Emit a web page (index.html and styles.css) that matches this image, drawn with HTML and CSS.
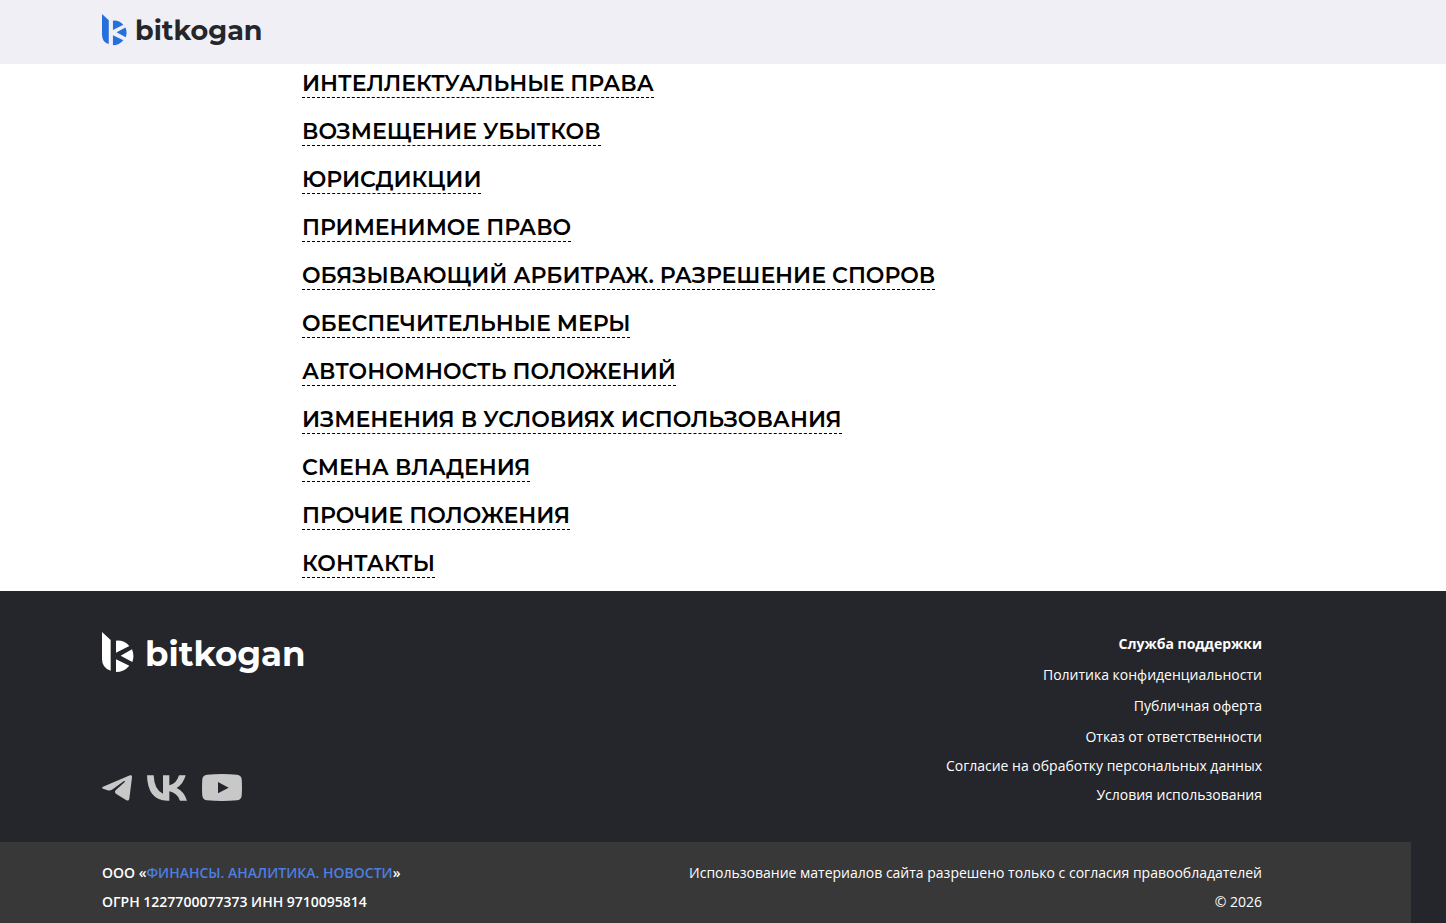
FILE: index.html
```html
<!DOCTYPE html>
<html lang="ru">
<head>
  <meta charset="UTF-8">
  <meta name="viewport" content="width=device-width, initial-scale=1.0">
  <title>Условия использования – bitkogan</title>
  <link rel="stylesheet" href="styles.css">
</head>
<body>
  <header class="header">
    <a class="logo" href="#">
      <svg class="logo-mark" viewBox="0 0 96 120" aria-hidden="true">
        <path d="M0 0L26 24V116Q0 108 0 80Z"/>
        <path d="M42 26Q66 24 82 42L42 62Z"/>
        <path d="M90 52Q98 70 91 90L56 71Z"/>
        <path d="M42 82L82 101Q66 120 42 120Z"/>
      </svg>
      <span>bitkogan</span>
    </a>
  </header>

  <main class="sections">
    <h2><a href="#">ИНТЕЛЛЕКТУАЛЬНЫЕ ПРАВА</a></h2>
    <h2><a href="#">ВОЗМЕЩЕНИЕ УБЫТКОВ</a></h2>
    <h2><a href="#">ЮРИСДИКЦИИ</a></h2>
    <h2><a href="#">ПРИМЕНИМОЕ ПРАВО</a></h2>
    <h2><a href="#">ОБЯЗЫВАЮЩИЙ АРБИТРАЖ. РАЗРЕШЕНИЕ СПОРОВ</a></h2>
    <h2><a href="#">ОБЕСПЕЧИТЕЛЬНЫЕ МЕРЫ</a></h2>
    <h2><a href="#">АВТОНОМНОСТЬ ПОЛОЖЕНИЙ</a></h2>
    <h2><a href="#">ИЗМЕНЕНИЯ В УСЛОВИЯХ ИСПОЛЬЗОВАНИЯ</a></h2>
    <h2><a href="#">СМЕНА ВЛАДЕНИЯ</a></h2>
    <h2><a href="#">ПРОЧИЕ ПОЛОЖЕНИЯ</a></h2>
    <h2><a href="#">КОНТАКТЫ</a></h2>
  </main>

  <footer class="footer">
    <div class="footer-top">
      <div class="footer-brand">
        <a class="logo logo-light" href="#">
          <svg class="logo-mark" viewBox="0 0 96 120" aria-hidden="true">
            <path d="M0 0L26 24V116Q0 108 0 80Z"/>
            <path d="M42 26Q66 24 82 42L42 62Z"/>
            <path d="M90 52Q98 70 91 90L56 71Z"/>
            <path d="M42 82L82 101Q66 120 42 120Z"/>
          </svg>
          <span>bitkogan</span>
        </a>
        <div class="socials">
          <a href="#" aria-label="Telegram">
            <svg width="30" height="26" viewBox="0 0 90 78">
              <path d="M3 35L84 1Q91 -1 90 7L82 71Q80 80 72 75L43 57Q36 52 41 46L69 20Q69 17 65 19L32 43Q24 48 17 46L3 41Q-2 38 3 35Z"/>
            </svg>
          </a>
          <a href="#" aria-label="VK">
            <svg width="40" height="26" viewBox="0 0 120 78">
              <path d="M0 1H20Q22 46 48 56V1H67V31Q88 27 96 1H116Q109 27 89 39Q111 49 120 77H99Q91 54 67 49V77H61Q2 77 0 1Z"/>
            </svg>
          </a>
          <a href="#" aria-label="YouTube">
            <svg width="40" height="27" viewBox="0 0 120 81">
              <path fill-rule="evenodd" d="M15 2Q60 -2 105 2Q117 3 119 15Q121 40 119 66Q117 78 105 79Q60 83 15 79Q3 78 1 66Q-1 40 1 15Q3 3 15 2ZM48 24V58L80 41Z"/>
            </svg>
          </a>
        </div>
      </div>
      <nav class="footer-nav">
        <div class="footer-links">
          <a class="support" href="#">Служба поддержки</a>
          <a href="#">Политика конфиденциальности</a>
          <a href="#">Публичная оферта</a>
          <a href="#">Отказ от ответственности</a>
        </div>
        <a href="#">Согласие на обработку персональных данных</a>
        <a href="#">Условия использования</a>
      </nav>
    </div>
    <div class="footer-bottom">
      <div class="company">
        ООО «<a href="#">ФИНАНСЫ. АНАЛИТИКА. НОВОСТИ</a>»<br>
        ОГРН 1227700077373 ИНН 9710095814
      </div>
      <div class="rights">
        Использование материалов сайта разрешено только с согласия правообладателей<br>
        © 2026
      </div>
    </div>
  </footer>
</body>
</html>
```
FILE: styles.css
```css
* {
  box-sizing: border-box;
}

body {
  margin: 0;
  font-family: "Open Sans", "Noto Sans", sans-serif;
  font-size: 14px;
  color: #000;
  background: #fff;
}

a {
  color: inherit;
  text-decoration: none;
}

svg {
  display: block;
  fill: currentColor;
}

.header {
  padding: 12px 102px 18px;
  background: #f0eff5;
}

.logo {
  display: flex;
  align-items: center;
  gap: 8px;
  width: max-content;
  font-family: Montserrat, Inter, sans-serif;
  font-size: 27px;
  font-weight: 700;
  line-height: 30px;
  color: #25262b;
}

.logo span {
  padding-top: 4px;
}

.logo-mark {
  width: 25px;
  height: 33px;
  color: #266fdd;
}

.sections {
  display: flex;
  flex-direction: column;
  gap: 21px;
  padding: 7px 102px 13px 302px;
}

.sections h2 {
  margin: 0;
  font-family: Montserrat, Inter, sans-serif;
  font-size: 22px;
  font-weight: 600;
  line-height: 26px;
}

.sections a {
  display: block;
  width: max-content;
  border-bottom: 1px dashed #000;
}

.footer {
  color: #fff;
  background: #25262b;
}

.footer-top {
  display: flex;
  justify-content: space-between;
  max-width: 1262px;
  padding: 38px 0 33px 102px;
}

.footer-brand {
  display: flex;
  flex-direction: column;
  justify-content: space-between;
  padding: 3px 0 8px;
}

.logo-light {
  gap: 11px;
  font-size: 34px;
  line-height: 36px;
  color: #fff;
}

.logo-light .logo-mark {
  width: 32px;
  height: 40px;
  color: #fff;
}

.socials {
  display: flex;
  align-items: center;
  gap: 15px;
  color: #c8c8c9;
}

.footer-nav,
.footer-links {
  display: flex;
  flex-direction: column;
  align-items: flex-end;
  line-height: 29px;
}

.footer-links {
  gap: 2px;
}

.support {
  font-weight: 700;
}

.footer-bottom {
  display: flex;
  justify-content: space-between;
  margin-right: 35px;
  padding: 16px 149px 7px 102px;
  line-height: 29px;
  background: #383838;
}

.company {
  font-weight: 600;
}

.company a {
  color: #4b7fe0;
}

.rights {
  text-align: right;
}
```
